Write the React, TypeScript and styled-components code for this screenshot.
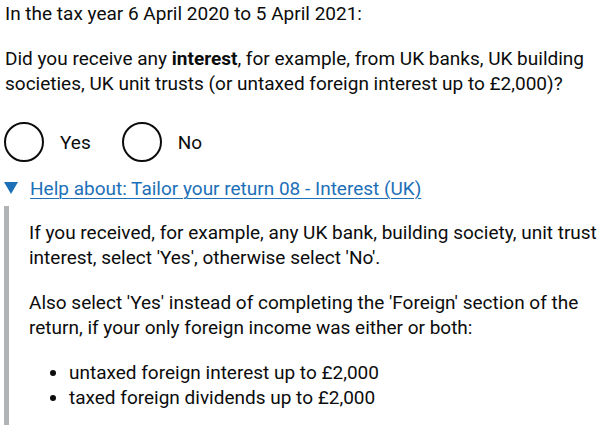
import React from 'react';
import styled, { createGlobalStyle } from 'styled-components';

const GlobalStyle = createGlobalStyle`
  body {
    margin: 0;
    background: #ffffff;
    color: #0b0c0c;
    font-family: Roboto, "Liberation Sans", Arial, sans-serif;
  }
`;

const Page = styled.main`
  padding: 1px 4px 0;
  font-size: 19px;
  line-height: 25px;
`;

const Body = styled.p`
  margin: 0 0 20px;
  padding-left: 1px;
`;

const Radios = styled.div`
  display: flex;
  align-items: center;
  gap: 31px;
  padding-top: 6px;
  margin-bottom: 14px;
`;

const RadioItem = styled.label`
  display: flex;
  align-items: center;
  gap: 16px;
  cursor: pointer;
`;

const RadioCircle = styled.span`
  width: 40px;
  height: 40px;
  box-sizing: border-box;
  border: 2px solid #0b0c0c;
  border-radius: 50%;
`;

const Details = styled.details`
  margin: 0;
`;

const Summary = styled.summary`
  display: flex;
  align-items: center;
  gap: 12px;
  list-style: none;
  color: #1d70b8;
  cursor: pointer;
  &::-webkit-details-marker {
    display: none;
  }
`;

const Arrow = styled.span`
  width: 0;
  height: 0;
  border-style: solid;
  border-width: 12px 7px 0 7px;
  border-color: #1d70b8 transparent transparent transparent;
  margin-top: -2px;
`;

const SummaryText = styled.span`
  text-decoration: underline;
  text-decoration-thickness: 1px;
  text-underline-offset: 3px;
`;

const DetailsText = styled.div`
  margin-top: 5px;
  padding: 14px 0 15px 20px;
  border-left: 5px solid #b1b4b6;
  white-space: nowrap;

  p {
    padding-left: 0;
  }
`;

const List = styled.ul`
  margin: 0;
  padding-left: 40px;
  list-style: disc;
  li {
    margin: 0;
  }
`;

export default function App() {
  return (
    <>
      <GlobalStyle />
      <Page>
        <Body>In the tax year 6 April 2020 to 5 April 2021:</Body>
        <Body>
          Did you receive any <strong>interest</strong>, for example, from UK banks, UK building
          <br />
          societies, UK unit trusts (or untaxed foreign interest up to £2,000)?
        </Body>
        <Radios>
          <RadioItem>
            <RadioCircle />
            <span>Yes</span>
          </RadioItem>
          <RadioItem>
            <RadioCircle />
            <span>No</span>
          </RadioItem>
        </Radios>
        <Details open>
          <Summary>
            <Arrow />
            <SummaryText>Help about: Tailor your return 08 - Interest (UK)</SummaryText>
          </Summary>
          <DetailsText>
            <Body>
              If you received, for example, any UK bank, building society, unit trust
              <br />
              interest, select 'Yes', otherwise select 'No'.
            </Body>
            <Body>
              Also select 'Yes' instead of completing the 'Foreign' section of the
              <br />
              return, if your only foreign income was either or both:
            </Body>
            <List>
              <li>untaxed foreign interest up to £2,000</li>
              <li>taxed foreign dividends up to £2,000</li>
            </List>
          </DetailsText>
        </Details>
      </Page>
    </>
  );
}
